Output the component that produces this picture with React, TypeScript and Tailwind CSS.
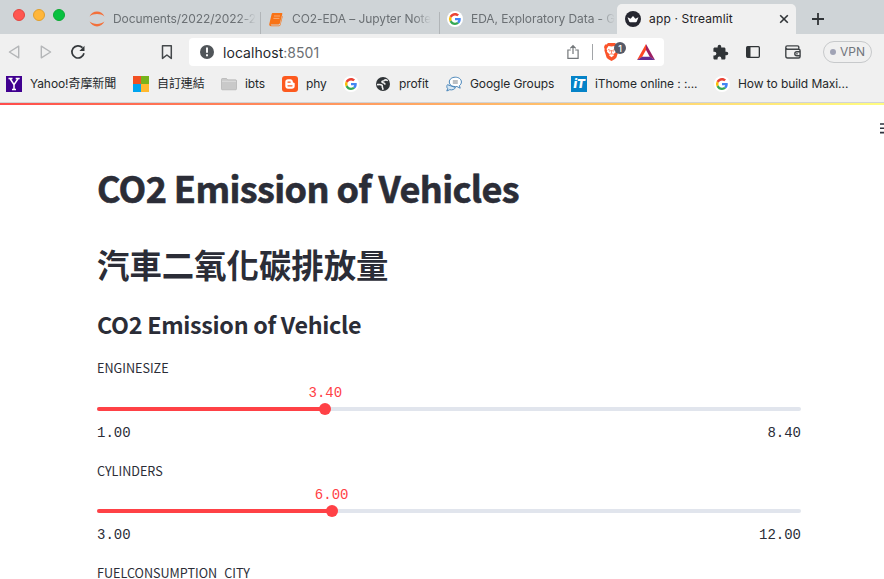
import type { ReactNode } from "react";

const UI = "font-['Inter','Noto_Sans_CJK_TC',sans-serif]";
const BODY = "font-['Noto_Sans_CJK_TC',sans-serif]";

function GoogleIcon() {
  return (
    <svg viewBox="0 0 16 16" className="size-4 shrink-0">
      <circle cx="8" cy="8" r="8" fill="#fff" />
      <g transform="translate(2 2) scale(.25)">
        <path fill="#EA4335" d="M24 9.5c3.5 0 6.7 1.2 9.2 3.6l6.9-6.9C35.9 2.4 30.5 0 24 0 14.6 0 6.5 5.4 2.6 13.2l8 6.2C12.4 13.7 17.7 9.5 24 9.5z" />
        <path fill="#4285F4" d="M47 24.6c0-1.6-.2-3.100-.4-4.600H24v9h12.900c-.6 3-2.300 5.500-4.800 7.200l7.700 6C44.400 38 47 31.800 47 24.600z" />
        <path fill="#FBBC05" d="M10.500 28.600A14.500 14.500 0 0 1 10.500 19.400l-8-6.200a24 24 0 0 0 0 21.600z" />
        <path fill="#34A853" d="M24 48c6.500 0 11.900-2.100 15.900-5.800l-7.700-6c-2.200 1.400-4.900 2.300-8.200 2.300-6.300 0-11.600-4.200-13.500-9.900l-8 6.200C6.500 42.600 14.600 48 24 48z" />
      </g>
    </svg>
  );
}

function JupyterIcon() {
  return (
    <svg viewBox="0 0 16 16" className="size-4 shrink-0" fill="#f3703a">
      <path d="M.6 5.400C2 2.500 4.700.6 8 .6s6 1.900 7.400 4.800C13.400 3.800 10.900 3 8 3S2.600 3.800.6 5.400z" />
      <path d="M.6 10.600C2 13.500 4.700 15.400 8 15.400s6-1.900 7.400-4.800C13.400 12.200 10.900 13 8 13s-5.400-.8-7.400-2.400z" />
    </svg>
  );
}

function NotebookIcon() {
  return (
    <svg viewBox="0 0 16 16" className="size-4 shrink-0">
      <path d="M5 2h8.600c.6 0 .9.500.7 1.100l-2.400 9.200c-.2.700-.7 1.100-1.400 1.100H3.400c-.5 0-.8.400-.5.700.1.200.4.300.7.300h7.300c.6 0 1-.3 1.200-.9l2.200-8.700.4.700-2.100 8.300c-.2.800-.9 1.400-1.700 1.400H3c-1.300 0-2.100-1-1.700-2.200L3.600 3.200C3.800 2.500 4.300 2 5 2z" fill="#f97316" />
      <path d="M6 5h6M5.400 7.400h6" stroke="#fbb78a" strokeWidth=".8" />
    </svg>
  );
}

function CrownIcon() {
  return (
    <svg viewBox="0 0 16 16" className="size-4 shrink-0">
      <circle cx="8" cy="8" r="8" fill="#262730" />
      <path d="M2.500 6.200l3.100 1.600L8 4.900l2.400 2.900 3.100-1.600-1.700 4.300c-.2.500-.5.700-1 .7H5.200c-.5 0-.8-.2-1-.7z" fill="#fff" />
    </svg>
  );
}

function Tab({ icon, title, className, divider }: { icon: ReactNode; title: string; className: string; divider?: boolean }) {
  return (
    <div className={`flex h-[30px] items-center ${className}`}>
      {icon}
      <span className="ml-2 shrink-0 whitespace-nowrap text-[12px] tracking-[-0.080px] text-[#6b7074] [mask-image:linear-gradient(to_right,#000_88%,transparent)]">
        {title}
      </span>
      {divider && <span className="ml-auto h-[22px] w-px self-end bg-[#b1b5b8]" />}
    </div>
  );
}

function TabBar() {
  return (
    <div className="flex h-[34px] items-end bg-[#cfd4d7]">
      <div className="flex h-[30px] w-[89px] items-start gap-2 pl-[13px] pt-[5px]">
        <span className="size-3 rounded-full border border-[#e24640] bg-[#ff5650]" />
        <span className="size-3 rounded-full border border-[#e09e2d] bg-[#ffb63a]" />
        <span className="size-3 rounded-full border border-[#0da935] bg-[#08c140]" />
      </div>
      <Tab icon={<JupyterIcon />} title="Documents/2022/2022-2" className="w-[172px]" divider />
      <Tab icon={<NotebookIcon />} title="CO2-EDA – Jupyter Note" className="w-[179px] pl-[7px]" divider />
      <Tab icon={<GoogleIcon />} title="EDA, Exploratory Data - G" className="w-[177px] pl-[7px]" />
      <div className="flex h-[30px] w-[179px] items-center rounded-t-[5px] bg-[#f0f0f0] pl-2">
        <CrownIcon />
        <span className="ml-2 whitespace-nowrap text-[12px] tracking-[0.15px] text-[#1f2225]">app · Streamlit</span>
        <svg viewBox="0 0 10 10" className="ml-auto mr-[7px] size-[10px]" stroke="#303437" strokeWidth="1.600">
          <path d="M1.200 1.200l7.600 7.600M8.800 1.200L1.200 8.800" />
        </svg>
      </div>
      <div className="flex h-[30px] items-center pl-4">
        <svg viewBox="0 0 12 12" className="size-3" stroke="#303437" strokeWidth="1.800">
          <path d="M6 0v12M0 6h12" />
        </svg>
      </div>
    </div>
  );
}

function Toolbar() {
  return (
    <div className="flex h-9 items-center bg-[#f0f0f0]">
      <svg viewBox="0 0 12 14" className="ml-2 h-[14px] w-3" fill="none" stroke="#b4b6b8" strokeWidth="1.400" strokeLinejoin="round">
        <path d="M10.700 1.200v11.600L1.400 7z" />
      </svg>
      <svg viewBox="0 0 12 14" className="ml-5 h-[14px] w-3" fill="none" stroke="#b4b6b8" strokeWidth="1.400" strokeLinejoin="round">
        <path d="M1.300 1.200v11.600L10.600 7z" />
      </svg>
      <svg viewBox="0 0 16 16" className="ml-[18px] size-4" fill="none" stroke="#34383b" strokeWidth="1.700">
        <path d="M12.500 3.700A6.100 6.100 0 1 0 14 9.300" />
        <path d="M14.500 1.800v5.100H9.400z" fill="#34383b" stroke="none" />
      </svg>
      <svg viewBox="0 0 12 16" className="ml-[75px] h-4 w-3" fill="none" stroke="#44484b" strokeWidth="1.500" strokeLinejoin="round">
        <path d="M1.500 1.800h8.800v12.600L5.900 11l-4.400 3.400z" />
      </svg>
      <div className="ml-4 flex h-7 w-[475px] items-center rounded-[4px] bg-white pl-[11px]">
        <svg viewBox="0 0 14 14" className="size-[14px]">
          <circle cx="7" cy="7" r="7" fill="#505559" />
          <path d="M7 2.600v5.200M7 9.300v2" stroke="#fff" strokeWidth="1.900" />
        </svg>
        <span className="ml-[9px] whitespace-nowrap text-[14px] tracking-[0.05px] text-[#25282b]">
          localhost<span className="text-[#6c7074]">:8501</span>
        </span>
        <svg viewBox="0 0 12 16" className="ml-auto mr-[13px] h-4 w-3" fill="none" stroke="#74787b" strokeWidth="1.200">
          <path d="M3.800 6H.9v8.400h10.200V6H8.200M6 10V1.800M3.300 4.300L6 1.600l2.700 2.700" />
        </svg>
        <span className="h-4 w-px bg-[#a2a5a8]" />
        <div className="relative ml-[11px] mr-[18px] h-[18px] w-[15px]">
          <svg viewBox="0 0 15 18" className="h-[18px] w-[15px]">
            <path d="M4 0h7l1.500 1.600 1.400-.2L15 4l-.6 2 .2 1.600-2 6.400c-.3 1-1.200 1.700-2 2.200L7.500 18l-3.100-1.800c-.8-.5-1.700-1.200-2-2.200l-2-6.400L.6 6 0 4l1.100-2.600 1.400.2z" fill="#fb542b" />
            <path d="M7.500 3.500l3-.6L12.500 6l-.8 1.800.4 1-2.100 1.900-1 .3 1 1.300-2.500 2-2.500-2 1-1.300-1-.3-2.100-1.900.4-1L2.500 6l2-3.100z" fill="#fff" />
            <path d="M4 6.500l2.300.8-.6 1.500M11 6.500l-2.300.8.600 1.500M7.500 7v3.500M6 11h3" stroke="#fb542b" strokeWidth=".7" fill="none" />
          </svg>
          <span className="absolute -top-[1px] left-[10px] flex size-3 items-center justify-center rounded-full bg-[#565a68] text-[9px] font-medium leading-none text-white">1</span>
        </div>
        <svg viewBox="0 0 18 16" className="mr-[9px] h-4 w-[18px]">
          <path d="M9 0L0 16l5.100-3L9 6z" fill="#ff4724" />
          <path d="M9 0l9 16-5.100-3L9 6z" fill="#9e1f63" />
          <path d="M0 16h18l-5.100-3.200H5.100z" fill="#662d91" />
        </svg>
      </div>
      <svg viewBox="0 0 24 24" className="ml-[48px] size-[17px]" fill="#303437">
        <path d="M20.500 11H19V7c0-1.100-.9-2-2-2h-4V3.500a2.500 2.500 0 0 0-5 0V5H4c-1.100 0-2 .9-2 2v3.800h1.500a2.700 2.700 0 0 1 0 5.400H2V20c0 1.100.9 2 2 2h3.800v-1.500a2.700 2.700 0 0 1 5.400 0V22H17c1.100 0 2-.9 2-2v-4h1.500a2.500 2.500 0 0 0 0-5z" />
      </svg>
      <svg viewBox="0 0 14 12" className="ml-[17px] h-3 w-[14px]" fill="none" stroke="#303437" strokeWidth="1.300">
        <rect x=".65" y=".65" width="12.700" height="10.700" rx="1" />
        <path d="M1 1h3.500v10H1z" fill="#303437" stroke="none" />
      </svg>
      <svg viewBox="0 0 16 14" className="ml-[25px] h-[14px] w-4" fill="none" stroke="#404447" strokeWidth="1.400">
        <path d="M13.800 4.300V2.200c0-.8-.5-1.300-1.300-1.300H2.200C1.300.9.8 1.600.8 2.400v8.700c0 1.100.7 1.900 1.800 1.900h10.900c1 0 1.600-.6 1.600-1.500V5.700c0-.8-.6-1.400-1.400-1.400H2.600C1.800 4.300 1.200 4 1 3.300M15 6.700h-3.200a2 2 0 0 0 0 4H15" />
        <path d="M11.300 8.700h1.300" />
      </svg>
      <div className="ml-[22px] flex h-[22px] w-[49px] items-center rounded-full border border-[#c7c9cb] pl-[6px]">
        <span className="size-[6px] rounded-full bg-[#a0a3b5]" />
        <span className="ml-[4px] text-[12px] text-[#70757c]">VPN</span>
      </div>
    </div>
  );
}

function Bookmark({ icon, label, className }: { icon: ReactNode; label?: string; className: string }) {
  return (
    <div className={`flex shrink-0 items-center gap-2 ${className}`}>
      {icon}
      {label && <span className="whitespace-nowrap text-[12px] tracking-[-0.08px] text-[#25282b]">{label}</span>}
    </div>
  );
}

function BookmarkBar() {
  return (
    <div className="flex h-8 items-center bg-[#f0f0f0] pb-[4px] pl-[6px]">
      <Bookmark
        className="w-[127px]"
        label="Yahoo!奇摩新聞"
        icon={
          <svg viewBox="0 0 16 16" className="size-4 shrink-0">
            <path d="M0 0h16v16H0z" fill="#400090" />
            <path d="M2.500 2.500h4M9.700 2.500h4M4 2.500l4 6.200 4.200-6.200M8 8v5.500M6 13.500h4" stroke="#fff" strokeWidth="1.500" fill="none" />
          </svg>
        }
      />
      <Bookmark
        className="w-[88px]"
        label="自訂連結"
        icon={
          <svg viewBox="0 0 16 16" className="size-4 shrink-0">
            <path d="M0 0h8v8H0z" fill="#f25022" />
            <path d="M8 0h8v8H8z" fill="#77b31c" />
            <path d="M0 8h8v8H0z" fill="#00a4ef" />
            <path d="M8 8h8v8H8z" fill="#ffb92e" />
          </svg>
        }
      />
      <Bookmark
        className="w-[61px]"
        label="ibts"
        icon={
          <svg viewBox="0 0 16 16" className="size-4 shrink-0">
            <path d="M.5 3.500c0-.7.300-1 1-1h4l1.200 1.300H14.500c.7 0 1 .3 1 1v8c0 .7-.3 1-1 1h-13c-.7 0-1-.3-1-1z" fill="#c9c9c9" stroke="#a9a9a9" strokeWidth=".6" />
            <path d="M1 5.300h14" stroke="#dedede" />
          </svg>
        }
      />
      <Bookmark
        className="w-[61px]"
        label="phy"
        icon={
          <svg viewBox="0 0 16 16" className="size-4 shrink-0">
            <rect width="16" height="16" rx="3" fill="#fc5a1f" />
            <path d="M6 3.200h2.300c1.500 0 2.500 1 2.500 2.400 0 .8.300 1 .9 1.100.7 0 1 .3 1 .9V10c0 1.700-1.100 2.800-2.800 2.800H6c-1.600 0-2.700-1.100-2.700-2.700V5.900c0-1.600 1.100-2.700 2.700-2.700z" fill="#fff" />
            <path d="M6 6.100h2.200M6 9.800h4" stroke="#fc5a1f" strokeWidth="1.300" strokeLinecap="round" />
          </svg>
        }
      />
      <Bookmark className="w-8" icon={<GoogleIcon />} />
      <Bookmark
        className="w-[71px]"
        label="profit"
        icon={
          <svg viewBox="0 0 16 16" className="size-4 shrink-0">
            <circle cx="8" cy="8" r="7" fill="#303437" />
            <path d="M12.200 4.300c-1.200-.8-2.300-.5-3.200.3-.6.500-2 .2-2.100 1.200-.1 1.200 2.600.6 3 2.200M2.700 8.600c1.800-.3 3.300-.2 4.200.6.900.7.100 1.500.5 2.300.2.400.5.700.5 1.700" fill="none" stroke="#f0f0f0" strokeWidth="1.600" strokeLinecap="round" />
          </svg>
        }
      />
      <Bookmark
        className="w-[125px]"
        label="Google Groups"
        icon={
          <svg viewBox="0 0 16 16" className="size-4 shrink-0" fill="#fff" stroke="#4a86ba" strokeWidth="1">
            <path d="M1.500 8.700c-1 1-.9 2.900.2 3.900L.8 15l2.900-1.300c2.400.6 5-.3 5.800-2.200z" fill="#d8e7f3" />
            <path d="M9.300 1.200c3.500 0 6.100 2 6.100 4.800 0 1.500-.8 2.800-2 3.600l.8 2.600-3.300-1.700c-4 .6-7.600-1.400-7.600-4.500 0-2.800 2.500-4.800 6-4.800z" />
            <path d="M6.800 5h5M6.800 7h5" stroke="#7a8087" />
          </svg>
        }
      />
      <Bookmark
        className="w-[143px]"
        label="iThome online : :..."
        icon={
          <span className="flex size-4 shrink-0 items-center justify-center bg-[#0583c8] text-[12px] font-black italic leading-none tracking-[-0.5px] text-white">iT</span>
        }
      />
      <Bookmark className="w-[140px]" label="How to build Maxi..." icon={<GoogleIcon />} />
    </div>
  );
}

function Slider({ label, min, max, value }: { label: string; min: number; max: number; value: number }) {
  const pct = ((value - min) / (max - min)) * 100;
  return (
    <div className="h-[102.400px] shrink-0">
      <div className="h-6 text-[12.600px] leading-6">{label}</div>
      <div className="mt-[14.600px] h-[29px] pt-[12px]">
        <div className="relative h-1 rounded-full bg-[#e1e5ed]">
          <div className="h-1 rounded-full bg-[#ff4146]" style={{ width: `${pct}%` }} />
          <div className="absolute top-1/2 size-3 -translate-x-1/2 -translate-y-1/2 rounded-full bg-[#ff4146]" style={{ left: `${pct}%` }} />
          <div className="absolute -top-[22px] -translate-x-1/2 font-['Liberation_Mono',monospace] text-[14px] leading-4 text-[#ff4146]" style={{ left: `${pct}%` }}>
            {value.toFixed(2)}
          </div>
        </div>
      </div>
      <div className="flex h-4 justify-between pt-px font-['Liberation_Mono',monospace] text-[14px] leading-4">
        <span>{min.toFixed(2)}</span>
        <span>{max.toFixed(2)}</span>
      </div>
    </div>
  );
}

export default function App() {
  return (
    <div className={`flex h-[579px] w-[884px] flex-col overflow-hidden bg-white ${UI}`}>
      <TabBar />
      <Toolbar />
      <BookmarkBar />
      <div className="h-px shrink-0 bg-[#d0d3d6]" />
      <div className="h-[2px] shrink-0 bg-gradient-to-r from-[#ff4b4b] to-[#fffd80]" />
      <div className="flex h-[60px] shrink-0 justify-end pt-[18px]">
        <svg viewBox="0 0 4 11" className="h-[11px] w-1" stroke="#31333f" strokeWidth="1.600">
          <path d="M0 1h4M0 5.300h4M0 9.600h4" />
        </svg>
      </div>
      <main className={`ml-[97px] flex min-h-0 w-[704px] flex-1 flex-col text-[#2b2d37] ${BODY}`}>
        <h1 className="h-[44px] shrink-0 whitespace-nowrap text-[36px] font-bold leading-[44px] tracking-[-0.620px] [-webkit-text-stroke:0.600px_#2b2d37]">CO2 Emission of Vehicles</h1>
        <h2 className="mt-[33px] h-[44px] shrink-0 whitespace-nowrap text-[32.400px] font-bold leading-[44px]">汽車二氧化碳排放量</h2>
        <h3 className="mt-[22px] h-8 shrink-0 whitespace-nowrap text-[23.300px] font-bold leading-8 tracking-[-0.300px]">CO2 Emission of Vehicle</h3>
        <div className="mt-[16.400px] flex flex-col">
          <Slider label="ENGINESIZE" min={1} max={8.4} value={3.4} />
          <Slider label="CYLINDERS" min={3} max={12} value={6} />
          <div className="h-6 text-[12.600px] leading-6">FUELCONSUMPTION_CITY</div>
        </div>
      </main>
    </div>
  );
}
